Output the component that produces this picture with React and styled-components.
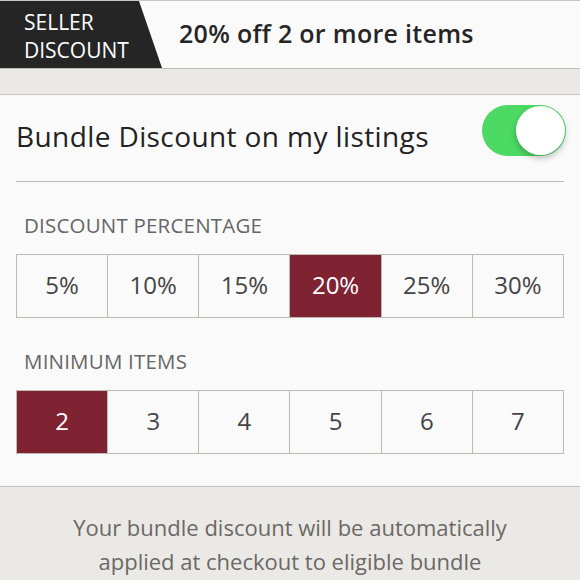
import styled, { createGlobalStyle } from "styled-components";

const GlobalStyle = createGlobalStyle`
  body {
    margin: 0;
    background: #ebe9e5;
    font-family: "Open Sans", "Lato", sans-serif;
  }
`;

const percentages = ["5%", "10%", "15%", "20%", "25%", "30%"];
const minimums = ["2", "3", "4", "5", "6", "7"];

const App = () => {
  return (
    <Page>
      <GlobalStyle />
      <Banner>
        <Tag>
          SELLER
          <br />
          DISCOUNT
        </Tag>
        <BannerText>20% off 2 or more items</BannerText>
      </Banner>
      <Spacer />
      <Panel>
        <ToggleRow>
          <ToggleLabel>Bundle Discount on my listings</ToggleLabel>
          <Switch>
            <Knob />
          </Switch>
        </ToggleRow>
        <Divider />
        <SectionTitle>DISCOUNT PERCENTAGE</SectionTitle>
        <Segments>
          {percentages.map((p) => (
            <Segment key={p} $active={p === "20%"}>
              {p}
            </Segment>
          ))}
        </Segments>
        <SectionTitle>MINIMUM ITEMS</SectionTitle>
        <Segments>
          {minimums.map((m) => (
            <Segment key={m} $active={m === "2"}>
              {m}
            </Segment>
          ))}
        </Segments>
      </Panel>
      <Footer>
        Your bundle discount will be automatically
        <br />
        applied at checkout to eligible bundle
      </Footer>
    </Page>
  );
};

export default App;

const Page = styled.div`
  width: 580px;
  height: 580px;
  overflow: hidden;
  background: #ebe9e5;
`;

const Banner = styled.div`
  height: 67px;
  display: flex;
  align-items: center;
  background: #fbfafa;
  border-top: 1px solid #c9c7c4;
  border-bottom: 1px solid #bdbbb8;
`;

const Tag = styled.div`
  align-self: stretch;
  width: 162px;
  box-sizing: border-box;
  padding: 7px 0 0 24px;
  background: #252525;
  color: #fff;
  font-size: 21px;
  line-height: 28px;
  clip-path: polygon(0 0, 139px 0, 162px 100%, 0 100%);
`;

const BannerText = styled.div`
  margin: 0 0 4px 17px;
  font-size: 25px;
  font-weight: 600;
  letter-spacing: 0.3px;
  color: #252525;
`;

const Spacer = styled.div`
  height: 25px;
`;

const Panel = styled.div`
  background: #fbfafa;
  border-top: 1px solid #c9c7c4;
  border-bottom: 1px solid #c2c0bd;
  padding: 0 16px 32px;
`;

const ToggleRow = styled.div`
  height: 86px;
  display: flex;
  align-items: center;
  justify-content: space-between;
`;

const ToggleLabel = styled.div`
  padding-bottom: 5px;
  font-size: 28px;
  letter-spacing: 0.4px;
  color: #222;
`;

const Switch = styled.div`
  width: 84px;
  height: 51px;
  border-radius: 26px;
  background: #4cd964;
  position: relative;
  margin: 0 -2px 16px 0;
`;

const Knob = styled.div`
  position: absolute;
  right: 1px;
  top: 1px;
  width: 49px;
  height: 49px;
  border-radius: 50%;
  background: #fff;
  box-shadow: 0 3px 6px rgba(0, 0, 0, 0.25);
`;

const Divider = styled.div`
  height: 1px;
  background: #bcbab7;
`;

const SectionTitle = styled.div`
  padding: 30px 0 16px 8px;
  font-size: 20.5px;
  letter-spacing: 0.2px;
  color: #666;
  line-height: 26px;
`;

const Segments = styled.div`
  display: grid;
  grid-template-columns: repeat(6, 1fr);
  border: 1px solid #bcbab7;
  border-right: none;
`;

const Segment = styled.div`
  height: 62px;
  box-sizing: border-box;
  padding-bottom: 4px;
  display: flex;
  align-items: center;
  justify-content: center;
  border-right: 1px solid #bcbab7;
  font-size: 24px;
  color: ${(p) => (p.$active ? "#fff" : "#444")};
  background: ${(p) => (p.$active ? "#7f2232" : "#fbfafa")};
`;

const Footer = styled.div`
  padding-top: 23px;
  text-align: center;
  font-size: 22px;
  line-height: 34px;
  color: #6b6865;
`;
